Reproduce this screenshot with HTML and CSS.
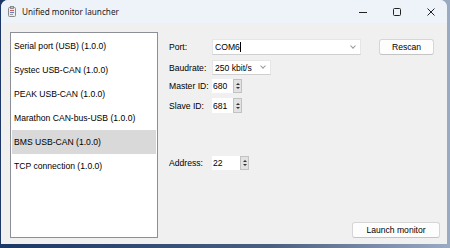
FILE: index.html
```html
<!DOCTYPE html>
<html lang="en">
<head>
    <meta charset="UTF-8">
    <title>Unified monitor launcher</title>
    <link rel="stylesheet" href="styles.css">
</head>
<body>

    <div class="window">
        <!-- Title bar -->
        <div class="titlebar">
            <svg class="app-icon" width="8" height="11" viewBox="0 0 8 11">
                <rect x="0.5" y="1.5" width="7" height="9" rx="1" fill="#ececec" stroke="#8a8a8a"/>
                <rect x="2.5" y="0.5" width="3" height="2" fill="#c4c4c4" stroke="#7a7a7a" stroke-width="0.8"/>
                <line x1="2" y1="4.5" x2="6" y2="4.5" stroke="#d06060"/>
                <line x1="2" y1="6.5" x2="6" y2="6.5" stroke="#6080c0"/>
                <line x1="2" y1="8.5" x2="5" y2="8.5" stroke="#a0a0a0"/>
            </svg>
            <span class="title">Unified monitor launcher</span>
            <div class="controls">
                <svg width="8" height="8" viewBox="0 0 8 8"><line x1="0" y1="4.5" x2="8" y2="4.5" stroke="#222"/></svg>
                <svg width="8" height="8" viewBox="0 0 8 8"><rect x="0.5" y="0.5" width="7" height="7" rx="1" fill="none" stroke="#222"/></svg>
                <svg width="8" height="8" viewBox="0 0 8 8"><path d="M0.5 0.5 L7.5 7.5 M7.5 0.5 L0.5 7.5" stroke="#222" stroke-width="1"/></svg>
            </div>
        </div>

        <div class="content">
            <!-- Monitor list -->
            <ul class="list">
                <li>Serial port (USB) (1.0.0)</li>
                <li>Systec USB-CAN (1.0.0)</li>
                <li>PEAK USB-CAN (1.0.0)</li>
                <li>Marathon CAN-bus-USB (1.0.0)</li>
                <li class="selected">BMS USB-CAN (1.0.0)</li>
                <li>TCP connection (1.0.0)</li>
            </ul>

            <!-- Settings -->
            <div class="panel">
                <div class="row row-port">
                    <label>Port:</label>
                    <div class="combo combo-port"><span>COM6<i class="caret"></i></span><span class="chev"></span></div>
                    <button class="btn btn-rescan">Rescan</button>
                </div>
                <div class="row row-baud">
                    <label>Baudrate:</label>
                    <div class="combo combo-baud"><span>250 kbit/s</span><span class="chev"></span></div>
                </div>
                <div class="row row-master">
                    <label>Master ID:</label>
                    <div class="spin"><span>680</span><span class="arrows"><b class="up"></b><b class="down"></b></span></div>
                </div>
                <div class="row row-slave">
                    <label>Slave ID:</label>
                    <div class="spin"><span>681</span><span class="arrows"><b class="up"></b><b class="down"></b></span></div>
                </div>
                <div class="row row-address">
                    <label>Address:</label>
                    <div class="spin spin-wide"><span>22</span><span class="arrows"><b class="up"></b><b class="down"></b></span></div>
                </div>
                <div class="footer">
                    <button class="btn btn-launch">Launch monitor</button>
                </div>
            </div>
        </div>
    </div>

</body>
</html>
```

FILE: styles.css
```css
* {
    margin: 0;
    padding: 0;
    box-sizing: border-box;
}

body {
    background: linear-gradient(90deg, #1d3766 0%, #4a5f80 60%, #9aabc2 100%);
    width: 450px;
    height: 248px;
    overflow: hidden;
    font-family: "Liberation Sans", Arial, sans-serif;
    font-size: 8.6px;
    color: #000;
    white-space: nowrap;
}

/* Window */
.window {
    width: 446px;
    height: 244px;
    margin-left: 1px;
    background: #f0f0f0;
    border-radius: 7px 7px 0 0;
    overflow: hidden;
    display: flex;
    flex-direction: column;
}

/* Title bar */
.titlebar {
    height: 23px;
    flex-shrink: 0;
    background: #eef3f9;
    display: flex;
    align-items: center;
    padding-left: 7px;
}

.app-icon {
    margin-right: 6px;
}

.title {
    font-family: "Noto Sans", sans-serif;
    font-size: 8.2px;
    color: #1a1a1a;
}

.controls {
    margin-left: auto;
    display: flex;
    gap: 26px;
    padding-right: 12px;
}

/* Content */
.content {
    flex: 1;
    display: flex;
    padding: 9px 7px 6px 9px;
}

.list {
    list-style: none;
    width: 148px;
    height: 206px;
    background: #fff;
    border: 1px solid #8c8f96;
    padding: 1px;
}

.list li {
    height: 24px;
    line-height: 24px;
    padding-left: 2px;
}

.list li.selected {
    background: #d9d9d9;
}

/* Settings panel */
.panel {
    flex: 1;
    display: flex;
    flex-direction: column;
    padding-left: 11px;
}

.row {
    display: flex;
    align-items: center;
}

.row label {
    width: 43px;
}

.row-port { margin-top: 7px; height: 16px; }
.row-baud { margin-top: 5px; height: 15px; }
.row-master { margin-top: 4px; height: 14px; }
.row-slave { margin-top: 5px; height: 15px; }
.row-address { margin-top: 43px; height: 14px; }

.combo {
    height: 100%;
    background: #fff;
    border: 1px solid #e6e6e6;
    border-bottom-color: #cfcfcf;
    display: flex;
    align-items: center;
    justify-content: space-between;
    padding: 0 5px 0 2px;
}

.combo-port { width: 149px; }
.combo-baud { width: 59px; }

.caret {
    display: inline-block;
    width: 1px;
    height: 10px;
    background: #000;
    vertical-align: -2px;
}

.chev {
    width: 4px;
    height: 4px;
    border-right: 1px solid #9a9a9a;
    border-bottom: 1px solid #9a9a9a;
    transform: rotate(45deg);
    margin-top: -3px;
}

.btn {
    font: inherit;
    background: #fdfdfd;
    border: 1px solid #d6d6d6;
    border-bottom-color: #c4c4c4;
    border-radius: 3px;
    color: #000;
}

.btn-rescan {
    width: 55px;
    height: 16px;
    margin-left: 18px;
}

/* Spin boxes */
.spin {
    width: 30px;
    height: 100%;
    background: #fff;
    display: flex;
    align-items: center;
    justify-content: space-between;
    padding-left: 1px;
}

.spin-wide { width: 37px; }

.arrows {
    width: 9px;
    height: 100%;
    background: #e2e2e2;
    border: 1px solid #c2c2c2;
    display: flex;
    flex-direction: column;
    align-items: center;
    justify-content: center;
    gap: 2px;
}

.arrows b {
    width: 0;
    height: 0;
    border-left: 2px solid transparent;
    border-right: 2px solid transparent;
}

.arrows .up { border-bottom: 2px solid #333; }
.arrows .down { border-top: 2px solid #333; }

/* Footer */
.footer {
    margin-top: auto;
    display: flex;
    justify-content: flex-end;
}

.btn-launch {
    width: 88px;
    height: 16px;
}
```
